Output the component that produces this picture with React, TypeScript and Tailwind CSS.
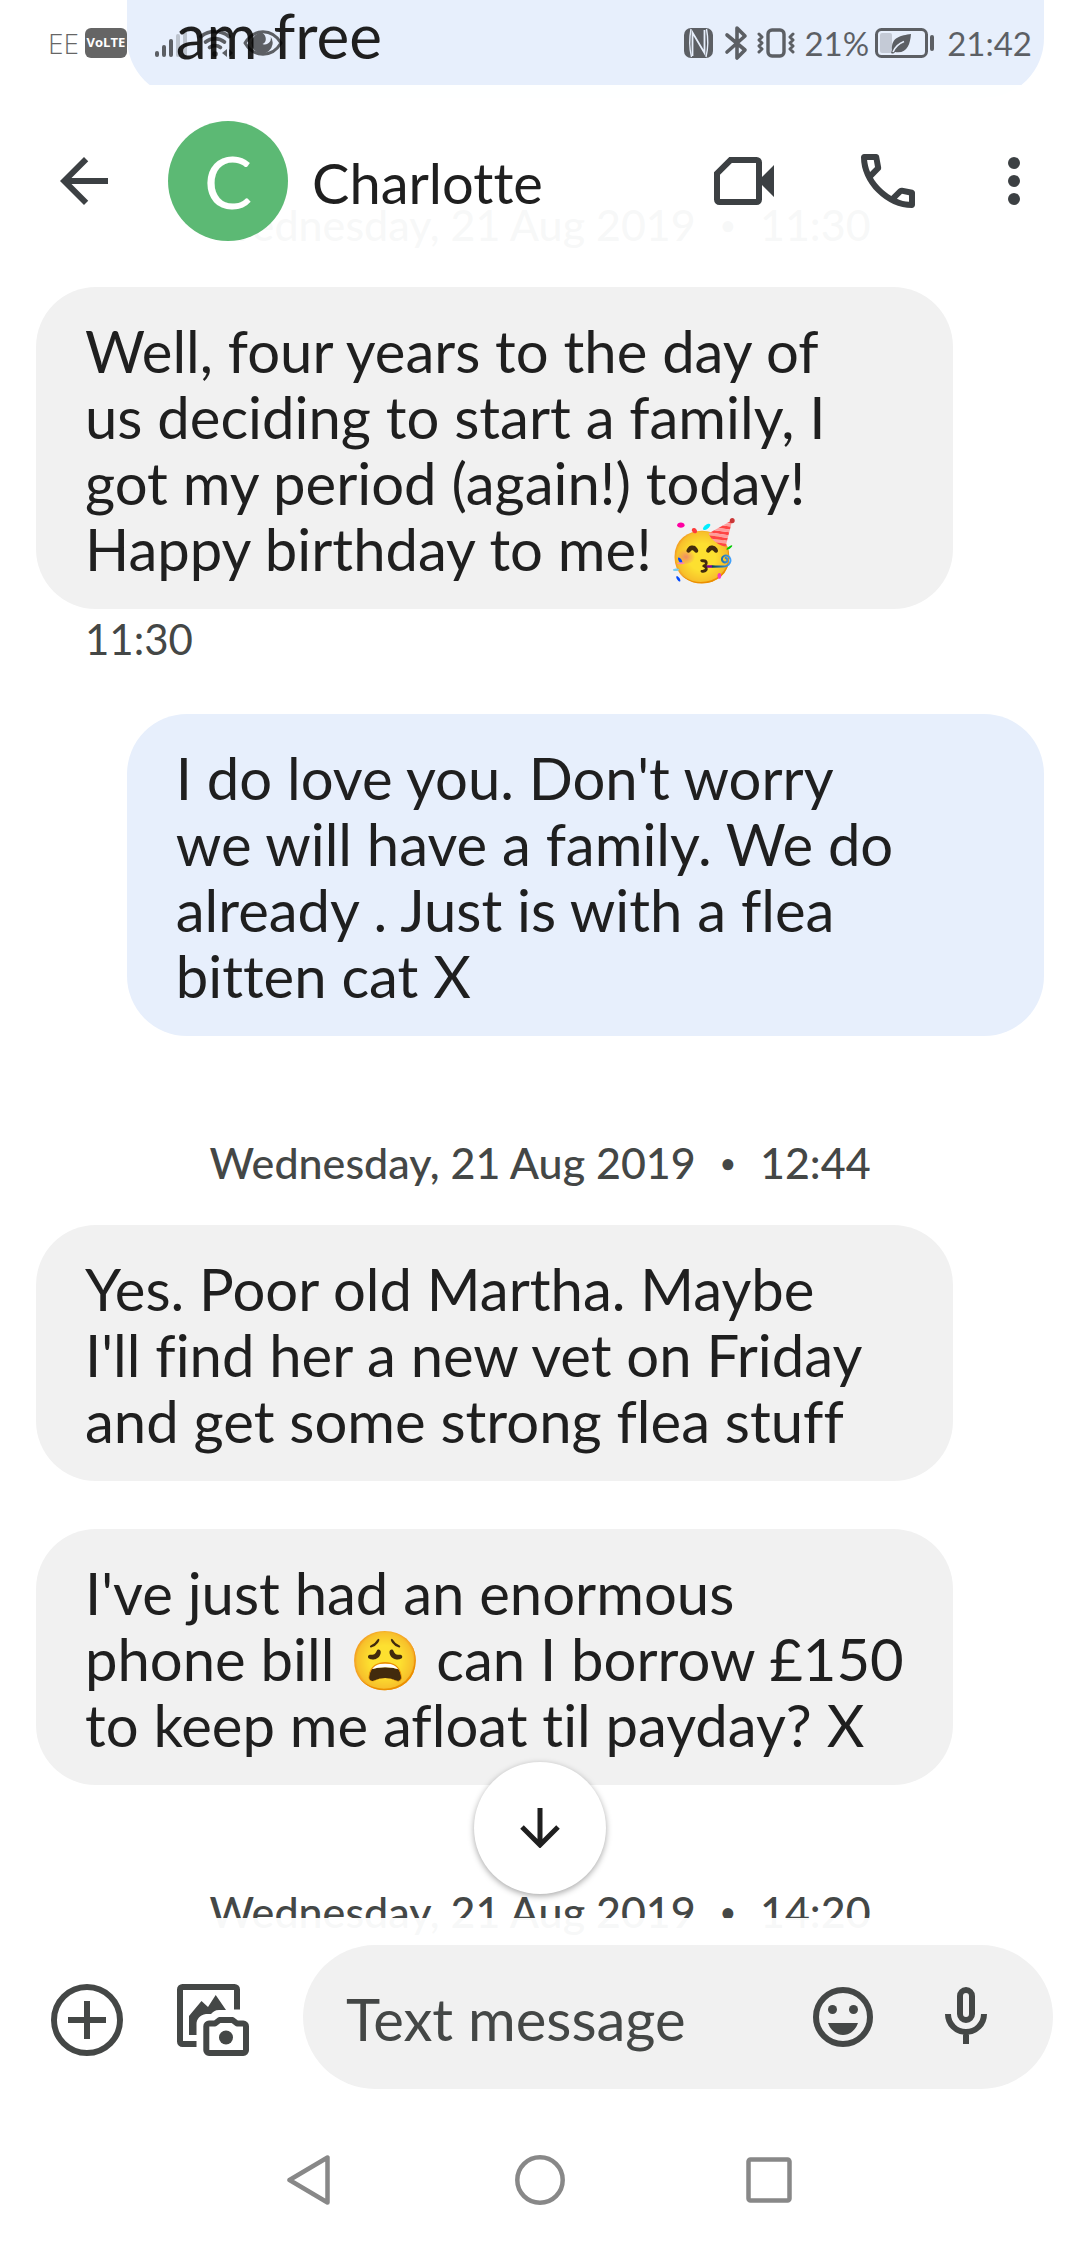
interface Message {
  id: number;
  mine?: boolean;
  text: string;
  time?: string;
  date?: [string, string];
  spaced?: boolean;
}

const DAY = "Wednesday, 21 Aug 2019";

const messages: Message[] = [
  {
    id: 1,
    date: [DAY, "11:30"],
    text: "Well, four years to the day of\nus deciding to start a family, I\ngot my period (again!) today!\nHappy birthday to me! 🥳",
    time: "11:30",
  },
  {
    id: 2,
    mine: true,
    text: "I do love you. Don't worry\nwe will have a family. We do\nalready . Just is with a flea\nbitten cat X",
  },
  {
    id: 3,
    date: [DAY, "12:44"],
    text: "Yes. Poor old Martha. Maybe\nI'll find her a new vet on Friday\nand get some strong flea stuff",
  },
  {
    id: 4,
    spaced: true,
    text: "I've just had an enormous\nphone bill 😩 can I borrow £150\nto keep me afloat til payday? X",
  },
];

function DateRow({ day, time }: { day: string; time: string }) {
  return (
    <div className="flex justify-center gap-6 pt-[97px] pb-8 text-[43px] leading-[60px] font-medium whitespace-nowrap text-[#444746]">
      <span>{day}</span>
      <span className="text-[28px]">•</span>
      <span>{time}</span>
    </div>
  );
}

function StatusBar() {
  return (
    <div className="absolute inset-x-0 top-0 z-20 flex h-[85px] items-center justify-between pr-12 pl-12 text-black opacity-60">
      {/* Network */}
      <div className="flex items-center">
        <span className="font-['Open_Sans',sans-serif] text-[28px] leading-8 font-light">
          EE
        </span>
        <span className="ml-1.5 flex h-[30px] w-[42px] items-center justify-center rounded-md bg-black font-['Open_Sans',sans-serif] text-[13px] leading-none font-bold text-white">
          VoLTE
        </span>
        <svg className="ml-7 h-[30px] w-8" viewBox="0 0 32 30" fill="currentColor">
          <rect x="0" y="23" width="4" height="6" rx="2" />
          <rect x="7" y="17" width="4" height="12" rx="2" />
          <rect x="14" y="11" width="4" height="18" rx="2" />
          <g opacity="0.3">
            <rect x="21" y="6" width="4" height="23" rx="2" />
            <rect x="28" y="2" width="4" height="27" rx="2" />
          </g>
        </svg>
        <svg className="ml-3 h-[30px] w-9" viewBox="0 0 36 30" fill="none" stroke="currentColor" strokeWidth="3.6" strokeLinecap="round">
          <path d="M2 8.500a22 22 0 0 1 28 0" />
          <path d="M6.500 14a15 15 0 0 1 19 0" />
          <path d="M10.500 19.500a9 9 0 0 1 11 0" />
          <circle cx="16" cy="26" r="2.800" fill="currentColor" stroke="none" />
          <path d="M28 21v8l-5-4zM30 21v8l4-4z" fill="currentColor" stroke="none" />
        </svg>
        <svg className="ml-2 h-[30px] w-10" viewBox="0 0 40 30" fill="none" stroke="currentColor" strokeWidth="3">
          <path d="M2 15C11 0 29 0 38 15C29 30 11 30 2 15Z" strokeLinejoin="round" />
          <path d="M19 4.500a10.500 10.500 0 1 0 10.500 12a10 10 0 0 0-2-8a6 6 0 0 1-8 7.500c4-1 5-8-.500-11.500z" fill="currentColor" stroke="none" />
        </svg>
      </div>

      {/* Device */}
      <div className="flex items-center">
        <svg className="h-[30px] w-[30px]" viewBox="0 0 30 30" fill="none">
          <rect width="29" height="30" rx="7" fill="currentColor" />
          <path d="M8.500 28V4.500L20.500 25V2" stroke="#e7effc" strokeWidth="1.800" />
          <path d="M7 1C5.500 9 5.500 21 7.500 29" stroke="#e7effc" strokeWidth="1.400" />
          <path d="M22.500 1C24 9 24 21 22 29" stroke="#e7effc" strokeWidth="1.400" />
        </svg>
        <svg className="ml-2.5 h-9 w-6" viewBox="0 0 24 36" fill="none" stroke="currentColor" strokeWidth="3.600" strokeLinecap="round" strokeLinejoin="round">
          <path d="M3 10L21 25L13 33V3L21 11L3 27" />
        </svg>
        <svg className="ml-2 h-[30px] w-10" viewBox="0 0 40 30" fill="none" stroke="currentColor" strokeWidth="3.400" strokeLinecap="round" strokeLinejoin="round">
          <rect x="12" y="2" width="16" height="26" rx="4" />
          <path d="M3 6l3 3-3 3 3 3-3 3 3 3-3 3M37 6l-3 3 3 3-3 3 3 3-3 3 3 3" strokeWidth="3" />
        </svg>
        <span className="ml-2 text-[33px] leading-9">21%</span>
        <svg className="ml-1.5 h-[30px] w-[60px]" viewBox="0 0 60 30" fill="none">
          <rect x="1.500" y="1.500" width="50" height="27" rx="5" stroke="currentColor" strokeWidth="3" />
          <rect x="5" y="5" width="12" height="20" rx="2" fill="currentColor" opacity="0.250" />
          <path d="M36 6C26 7.500 16 9 17 22L16 25C18 26 19 25.500 20 24C32 26 35 17 36 6Z" fill="currentColor" />
          <path d="M18 24C20 19 24 15.500 29 13.500" stroke="#e7effc" strokeWidth="1.600" />
          <rect x="55" y="7" width="4" height="16" rx="2" fill="currentColor" />
        </svg>
        <span className="ml-3 text-[33px] leading-9">21:42</span>
      </div>
    </div>
  );
}

function Header() {
  return (
    <header className="absolute inset-x-0 top-[85px] z-10 flex items-center bg-white/96 pt-9 pr-[30px] pb-8 pl-12 text-[#3c4043]">
      <button aria-label="Back">
        <svg className="h-[72px] w-[72px]" viewBox="0 0 24 24" fill="currentColor">
          <path d="M20 11H7.830l5.590-5.590L12 4l-8 8 8 8 1.410-1.410L7.830 13H20v-2z" />
        </svg>
      </button>
      <div className="ml-12 flex h-[120px] w-[120px] items-center justify-center rounded-full bg-[#5cb974] text-[72px] leading-none text-white">
        C
      </div>
      <h1 className="ml-6 flex-1 pt-1 text-[56px] leading-[66px] text-[#1f1f1f]">
        Charlotte
      </h1>
      <button aria-label="Video call">
        <svg className="h-[72px] w-[72px]" viewBox="0 0 24 24" fill="currentColor">
          <path fillRule="evenodd" d="M7.100 4H16.200A1.800 1.800 0 0 1 18 5.800V10.670L22 6.670V17.330L18 13.330V18.200A1.800 1.800 0 0 1 16.200 20H3.800A1.800 1.800 0 0 1 2 18.200V9.100ZM7.950 6L4 9.950V18H16V6Z" />
        </svg>
      </button>
      <button aria-label="Call" className="ml-[72px]">
        <svg className="h-[72px] w-[72px]" viewBox="0 0 24 24" fill="currentColor">
          <path d="M19.950 21q-3.125 0-6.175-1.363t-5.550-3.862q-2.500-2.500-3.863-5.550T3 4.050q0-.450.300-.750t.750-.300H8.100q.350 0 .625.238t.325.562l.650 3.500q.050.400-.025.675T9.400 8.450L6.975 10.900q.500.925 1.187 1.787t1.513 1.663q.775.775 1.625 1.438T13.100 17l2.350-2.350q.225-.225.588-.338t.712-.062l3.450.700q.350.100.575.363T21 15.900v4.050q0 .450-.300.750t-.750.300M6.025 9l1.650-1.650L7.250 5H5.025q.125 1.025.350 2.025T6.025 9m8.950 8.950q.975.425 1.988.675T19 18.950v-2.200l-2.350-.475z" />
        </svg>
      </button>
      <button aria-label="More options" className="ml-[54px]">
        <svg className="h-[72px] w-[72px]" viewBox="0 0 24 24" fill="currentColor">
          <circle cx="12" cy="6" r="2" />
          <circle cx="12" cy="12" r="2" />
          <circle cx="12" cy="18" r="2" />
        </svg>
      </button>
    </header>
  );
}

function Composer() {
  return (
    <div className="flex items-center pt-[27px] pr-[27px] pb-[27px] pl-[51px] text-[#444746]">
      <div className="flex gap-[54px] pt-1.5">
        <button aria-label="Add attachment">
          <svg className="h-[72px] w-[72px]" viewBox="0 0 72 72" fill="none" stroke="currentColor" strokeWidth="6">
            <circle cx="36" cy="36" r="33" />
            <path d="M36 17v38M17 36h38" />
          </svg>
        </button>
        <button aria-label="Gallery">
          <svg className="h-[72px] w-[72px]" viewBox="0 0 72 72" fill="none" stroke="currentColor" strokeWidth="6">
            <path d="M60 25.500V5.500a2.500 2.500 0 0 0-2.500-2.500H5.500A2.500 2.500 0 0 0 3 5.500v52a2.500 2.500 0 0 0 2.500 2.500h14" />
            <path d="M12 51V32L24.500 17L31 23L38.700 11L49 26H42C38 26 36 28 34 30H29C23 31 19.500 35 19.500 40V51Z" fill="currentColor" stroke="none" />
            <path d="M38 39.500h-6a2.700 2.700 0 0 0-2.700 2.700v24.100a2.700 2.700 0 0 0 2.700 2.700h34.300a2.700 2.700 0 0 0 2.700-2.700V42.200a2.700 2.700 0 0 0-2.700-2.700H60L55.500 36H42.500Z" strokeLinejoin="round" />
            <circle cx="49" cy="53.500" r="7" fill="currentColor" stroke="none" />
          </svg>
        </button>
      </div>
      <div className="ml-[54px] flex h-36 min-w-0 flex-1 items-center rounded-full bg-[#f1f1f1] pr-[66px] pl-[43px]">
        <input
          type="text"
          aria-label="Text message"
          placeholder="Text message"
          className="min-w-0 flex-1 bg-transparent pt-1 text-[58px] leading-[72px] outline-none placeholder:text-[#444746]"
        />
        <button aria-label="Emoji">
          <svg className="h-[60px] w-[60px]" viewBox="0 0 60 60" fill="currentColor">
            <circle cx="30" cy="30" r="27" fill="none" stroke="currentColor" strokeWidth="6" />
            <circle cx="19.500" cy="22.500" r="4.500" />
            <circle cx="40.500" cy="22.500" r="4.500" />
            <path d="M15 36h30c-2.500 7-8 12-15 12s-12.500-5-15-12z" />
          </svg>
        </button>
        <button aria-label="Voice message" className="ml-[72px]">
          <svg className="h-[60px] w-[42px]" viewBox="0 0 42 60" fill="none" stroke="currentColor" strokeWidth="6">
            <rect x="15" y="3" width="12" height="30" rx="6" />
            <path d="M3 27c0 10 8 18 18 18s18-8 18-18M21 45v12" />
          </svg>
        </button>
      </div>
    </div>
  );
}

function NavBar() {
  return (
    <nav className="flex h-32 items-center justify-center gap-[180px] text-[#888888]">
      <button aria-label="System back">
        <svg className="h-[50px] w-[50px]" viewBox="0 0 50 50" fill="none" stroke="currentColor" strokeWidth="4.500" strokeLinejoin="round">
          <path d="M4.500 25L42.500 2.500V47.500Z" />
        </svg>
      </button>
      <button aria-label="Home">
        <svg className="h-[50px] w-[50px]" viewBox="0 0 50 50" fill="none" stroke="currentColor" strokeWidth="4.500">
          <circle cx="25" cy="25" r="22.700" />
        </svg>
      </button>
      <button aria-label="Recent apps">
        <svg className="h-[50px] w-[50px]" viewBox="0 0 50 50" fill="none" stroke="currentColor" strokeWidth="4.500">
          <rect x="3.500" y="4.500" width="41" height="41" rx="2" />
        </svg>
      </button>
    </nav>
  );
}

export default function App() {
  return (
    <div className="relative h-screen overflow-hidden bg-white font-['Lato','Noto_Color_Emoji',sans-serif] [font-variant-ligatures:none]">
      <StatusBar />
      <Header />

      {/* Conversation, scrolled under both bars */}
      <main className="-mt-[26px] flex flex-col px-9 text-[58px] leading-[66px] text-[#1f1f1f]">
        <p className="w-[91%] self-end rounded-b-[60px] bg-[#e7effc] px-[49px] pt-7 pb-[30px] text-[62px]">
          am free
        </p>
        {messages.map((m) => (
          <div key={m.id} className={`flex flex-col ${m.spaced ? "mt-12" : ""}`}>
            {m.date && <DateRow day={m.date[0]} time={m.date[1]} />}
            <p
              className={`w-[91%] rounded-[60px] px-[49px] pt-[31px] pb-[27px] whitespace-pre-line ${
                m.mine ? "self-end bg-[#e7effc]" : "bg-[#f1f1f1]"
              }`}
            >
              {m.text}
            </p>
            {m.time && (
              <span className="pb-[45px] pl-[49px] text-[42px] leading-[60px] text-[#444746]">
                {m.time}
              </span>
            )}
          </div>
        ))}
        <DateRow day={DAY} time="14:20" />
      </main>

      <footer className="absolute inset-x-0 bottom-0 z-10 bg-white/96">
        <button
          aria-label="Scroll to latest"
          className="absolute bottom-full left-1/2 mb-6 flex h-[132px] w-[132px] -translate-x-1/2 items-center justify-center rounded-full bg-white text-[#1f1f1f] shadow-[0_2px_6px_rgba(0,0,0,0.35)]"
        >
          <svg className="h-10 w-10" viewBox="0 0 40 40" fill="none" stroke="currentColor" strokeWidth="5">
            <path d="M20 0v37M2 19l18 18 18-18" />
          </svg>
        </button>
        <Composer />
        <NavBar />
      </footer>
    </div>
  );
}
